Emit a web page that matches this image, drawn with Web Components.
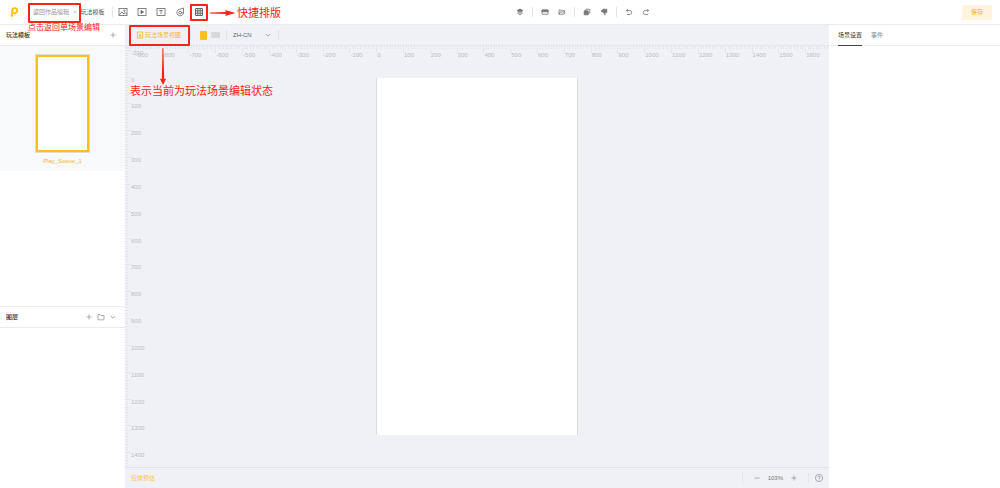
<!DOCTYPE html>
<html lang="zh-CN">
<head>
<meta charset="utf-8">
<meta name="viewport" content="width=device-width, initial-scale=1">
<title>玩法模板</title>
<style>
  html, body { height: 100%; margin: 0; }
  body {
    font: 6px/10px "Liberation Sans", "Noto Sans CJK SC", sans-serif;
    color: #444;
    background: #fff;
    --accent: #fbc116;
    --accent-text: #f5b62c;
    --line: #e9ebef;
    --stage: #eff1f5;
    --mark: #fc2417;
  }
</style>
</head>
<body>
<scene-editor></scene-editor>

<script>
const define = (name, html, setup) => {
  const tpl = document.createElement('template');
  tpl.innerHTML = html;
  customElements.define(name, class extends HTMLElement {
    connectedCallback() {
      if (this.shadowRoot) return;
      this.attachShadow({ mode: 'open' }).append(tpl.content.cloneNode(true));
      if (setup) setup(this, this.shadowRoot);
    }
  });
};

/* Icons: [viewBox size, markup] */
const ICONS = {
  logo: [12, '<g fill="none" stroke="#fbc116" stroke-width="1.900"><circle cx="6.700" cy="4.600" r="2.500"/><path d="M4.300 4.200 3.800 10.800"/></g>'],
  image: [10, '<rect x="1" y="1.500" width="8" height="7"/><path d="M1.200 8 4 5l2 2 1.200-1.400L9 7.500"/><circle cx="6.500" cy="3.700" r=".7"/>'],
  play: [10, '<rect x="1" y="1.500" width="8" height="7"/><path d="M4 3.500v3L6.600 5z" fill="currentColor"/>'],
  text: [10, '<rect x="1" y="1.500" width="8" height="7"/><path d="M3.200 3.500h3.600M5 3.500v3.600"/>'],
  target: [10, '<path d="M5.400 2.200a3.300 3.300 0 1 0 3 2.600"/><circle cx="5.200" cy="5.600" r="1.400"/><path d="M5.200 2.200 8.500 1v3.800c0 1-.8 1.500-1.900 1"/>'],
  grid: [10, '<path d="M1.500 1.500h7v7h-7zM1.500 3.800h7M1.500 6.200h7M3.800 1.500v7M6.200 1.500v7" stroke-width="1"/>'],
  layers: [8, '<path d="M4 1 7 2.500 4 4 1 2.500z" fill="currentColor"/><path d="M1.500 4 4 5.300 6.500 4M1.500 5.500 4 6.800 6.500 5.500"/>'],
  folder: [8, '<path d="M1 2h6v4.300H1z"/><path d="M1 2h6v1.800H1z" fill="currentColor"/>'],
  open: [8, '<path d="M1 6.200V2h2l.6.700h2.900v1.200M1 6.200 2.200 4H7L6.200 6.200z"/>'],
  copy: [8, '<path d="M2.800 1.200h4v4h-4z"/><path d="M1.200 2.800h4v4h-4z" fill="currentColor"/>'],
  paste: [8, '<path d="M1 3.200 3.200 1.200h3.600v3L4.500 5.200z" fill="currentColor"/><path d="M4 4.500 5 7l.7-1.500"/>'],
  undo: [8, '<path d="M2.800 1.200 1.300 2.500l1.500 1.400M1.500 2.500h3.200a2 2 0 0 1 0 4H2"/>'],
  redo: [8, '<path d="M5.200 1.200 6.700 2.500 5.200 3.900M6.500 2.500H3.300a2 2 0 0 0 0 4H6"/>'],
  plus: [8, '<path d="M4 1.500v5M1.500 4h5"/>'],
  minus: [8, '<path d="M1.500 4h5"/>'],
  newdir: [8, '<path d="M1 1.500h2.200l.8 1h3v4.300H1z"/>'],
  chevron: [8, '<path d="M1.800 3 4 5.200 6.200 3"/>'],
  scene: [8, '<rect x="1.300" y="1" width="5.400" height="6"/><path d="M2.700 4h2.600M4 2.700v2.600M3 5.700h2"/>'],
  help: [10, '<circle cx="5" cy="5" r="3.600"/><path d="M3.900 4.200a1.100 1.100 0 1 1 1.100 1.200v.7M5 6.900v.5"/>']
};
define('ui-icon', `
  <style>
    :host { display: inline-flex; flex: none; }
    svg { display: block; fill: none; stroke: currentColor; stroke-width: .8; }
  </style>`, (host, root) => {
  const [s, body] = ICONS[host.getAttribute('name')];
  root.innerHTML += `<svg width="${s}" height="${s}" viewBox="0 0 ${s} ${s}" aria-hidden="true">${body}</svg>`;
});

define('icon-button', `
  <style>
    :host { display: inline-flex; flex: none; }
    button { display: flex; border: 0; padding: 0; background: none; color: inherit; cursor: pointer; }
  </style>
  <button type="button"></button>`, (host, root) => {
  const b = root.querySelector('button');
  b.setAttribute('aria-label', host.getAttribute('label'));
  b.innerHTML = `<ui-icon name="${host.getAttribute('icon')}"></ui-icon>`;
});

define('v-rule', `
  <style>:host { display: block; flex: none; width: 1px; height: 10px; background: #e2e4ea; }</style>`);

define('top-bar', `
  <style>
    :host { display: grid; grid-template-columns: 3fr auto 2fr; align-items: center; height: 24px;
      padding: 0 8px; border-bottom: 1px solid var(--line); background: #fff; }
    div, nav { display: flex; align-items: center; }
    nav { margin-left: 13px; gap: 4px; color: #999; white-space: nowrap; }
    a { color: #999; text-decoration: none; }
    .here { color: #555; }
    .insert { gap: 9px; margin-left: 5px; color: #666; }
    nav + v-rule { margin-left: 7px; }
    .tools { gap: 8px; padding-right: 4px; color: #777; }
    .tools icon-button + icon-button { margin-left: 1px; }
    .save { justify-content: flex-end; }
    .save button { width: 30px; height: 15px; border: 0; border-radius: 1px; padding: 0; background: #fff5dc;
      color: #f5ac16; font: inherit; }
  </style>
  <div>
    <ui-icon name="logo"></ui-icon>
    <nav><a href="#work">返回作品编辑</a><span>&gt;</span><span class="here">玩法模板</span></nav>
    <v-rule></v-rule>
    <div class="insert">
      <icon-button icon="image" label="图片"></icon-button>
      <icon-button icon="play" label="视频"></icon-button>
      <icon-button icon="text" label="文本"></icon-button>
      <icon-button icon="target" label="热区"></icon-button>
      <icon-button icon="grid" label="排版"></icon-button>
    </div>
  </div>
  <div class="tools">
    <icon-button icon="layers" label="层级"></icon-button><v-rule></v-rule>
    <icon-button icon="folder" label="组合"></icon-button>
    <icon-button icon="open" label="取消组合"></icon-button><v-rule></v-rule>
    <icon-button icon="copy" label="复制"></icon-button>
    <icon-button icon="paste" label="粘贴"></icon-button><v-rule></v-rule>
    <icon-button icon="undo" label="撤销"></icon-button>
    <icon-button icon="redo" label="重做"></icon-button>
  </div>
  <div class="save"><button type="button">保存</button></div>`);

define('panel-head', `
  <style>
    :host { display: flex; align-items: center; gap: 4px; height: 20px; padding: 0 8px 0 6px;
      border-bottom: 1px solid var(--line); color: #999; }
    h2 { flex: 1; margin: 0; font: inherit; font-weight: 500; color: #333; }
  </style>
  <h2><slot></slot></h2><slot name="actions"></slot>`);

define('side-panel', `
  <style>
    :host { display: flex; flex-direction: column; min-height: 0; background: #fff; }
    .scenes { flex: 0 0 61%; box-sizing: border-box; border-bottom: 1px solid var(--line); }
    .list { display: flex; justify-content: center; padding: 9px 0 5px; background: #f7f9fa; }
    figure { margin: 0; display: flex; flex-direction: column; align-items: center; gap: 4px; }
    .thumb { width: 49px; height: 93px; border: 2px solid var(--accent); background: #fff; box-shadow: 0 0 0 1px #e2ddcb; }
    figcaption { color: var(--accent-text); }
  </style>
  <section class="scenes">
    <panel-head>玩法模板<icon-button slot="actions" icon="plus" label="添加模板"></icon-button></panel-head>
    <div class="list"><figure><div class="thumb"></div><figcaption>Play_Scene_1</figcaption></figure></div>
  </section>
  <section>
    <panel-head>图层
      <icon-button slot="actions" icon="plus" label="添加图层"></icon-button>
      <icon-button slot="actions" icon="newdir" label="新建文件夹"></icon-button>
      <icon-button slot="actions" icon="chevron" label="展开"></icon-button>
    </panel-head>
  </section>`);

define('stage-toolbar', `
  <style>
    :host { display: flex; align-items: center; height: 20px; padding: 0 11px; border-bottom: 1px solid #e4e6ea; }
    .view { display: flex; align-items: center; gap: 1px; border: 0; padding: 0; background: none;
      color: var(--accent-text); font: inherit; white-space: nowrap; }
    .view ui-icon { color: inherit; }
    .tall, .wide { border: 0; padding: 0; border-radius: 1px; }
    .tall { width: 7px; height: 9px; background: var(--accent); }
    .wide { width: 9px; height: 6px; margin: 0 6px 0 4px; background: #d8d8d8; }
    .view + v-rule { margin: 0 9px; }
    label { display: flex; align-items: center; margin: 0 6px; }
    select { appearance: none; width: 31px; border: 0; padding: 0; background: none; color: #666; font: inherit; outline: 0; }
    ui-icon { color: #999; }
  </style>
  <button class="view" type="button"><ui-icon name="scene"></ui-icon>玩法场景视图</button>
  <v-rule></v-rule>
  <button class="tall" type="button" aria-label="竖屏"></button>
  <button class="wide" type="button" aria-label="横屏"></button>
  <v-rule></v-rule>
  <label><select aria-label="语言"><option>ZH-CN</option></select><ui-icon name="chevron"></ui-icon></label>
  <v-rule></v-rule>`);

/* Ruler: one cell per 100 units, ten ticks in each cell. */
define('stage-ruler', `
  <style>
    :host { display: grid; color: #bbbdc1; --tick: #e3e5e9; }
    :host([axis="x"]) { grid-auto-flow: column; grid-auto-columns: minmax(0, 1fr); height: 14px; }
    :host([axis="y"]) { grid-auto-rows: minmax(0, 1fr); width: 24px; }
    span { white-space: nowrap; background-repeat: no-repeat; }
    :host([axis="x"]) span { padding: 4px 0 0 1px; background-size: 100% 3px, 1px 7px;
      background-image: repeating-linear-gradient(90deg, var(--tick) 0 1px, transparent 1px 10%), linear-gradient(var(--tick), var(--tick)); }
    :host([axis="y"]) span { padding-left: 6px; line-height: 7px; background-size: 3px 100%, 6px 1px;
      background-image: repeating-linear-gradient(var(--tick) 0 1px, transparent 1px 10%), linear-gradient(var(--tick), var(--tick)); }
  </style>`, (host, root) => {
  const from = +host.getAttribute('from'), to = +host.getAttribute('to');
  for (let v = from; v <= to; v += 100) {
    const s = document.createElement('span');
    if (v !== from) s.textContent = v;
    root.append(s);
  }
});

define('stage-canvas', `
  <style>
    :host { display: grid; min-height: 0; overflow: hidden; }
    :host > * { grid-area: 1 / 1; }
    stage-ruler, .board { grid-area: 1 / 1; }
    [axis="x"] { margin: 0 -3px 0 -17px; align-self: start; }
    [axis="y"] { margin: -23px 0 -12px; justify-self: start; }
    .board { place-self: center; width: 200px; height: 357px; background: #fff;
      border: solid #d9dbe0; border-width: 0 1px; }
  </style>
  <stage-ruler axis="x" from="-1000" to="1600"></stage-ruler>
  <stage-ruler axis="y" from="-200" to="1400"></stage-ruler>
  <div class="board"></div>`);

define('status-bar', `
  <style>
    :host { display: flex; align-items: center; height: 20px; padding: 0 5px 0 6px; border-top: 1px solid #e2e4e9; color: #999; }
    a { flex: 1; color: #fcc74a; text-decoration: none; }
    .zoom { display: flex; align-items: center; gap: 7px; margin: 0 10px; }
    output { color: #777; }
    .help { margin-left: 5px; }
  </style>
  <a href="#size">包体预估</a>
  <v-rule></v-rule>
  <div class="zoom">
    <icon-button icon="minus" label="缩小"></icon-button><output>103%</output><icon-button icon="plus" label="放大"></icon-button>
  </div>
  <v-rule></v-rule>
  <icon-button class="help" icon="help" label="帮助"></icon-button>`);

define('property-panel', `
  <style>
    :host { display: block; background: #fff; }
    div { display: flex; gap: 9px; height: 20px; padding: 0 9px; border-bottom: 1px solid var(--line); }
    button { border: 0; border-bottom: 1px solid transparent; margin-bottom: -1px; padding: 0; background: none; color: #888; font: inherit; }
    [aria-selected="true"] { color: #333; border-color: #444; }
  </style>
  <div role="tablist">
    <button type="button" role="tab" aria-selected="true">场景设置</button>
    <button type="button" role="tab" aria-selected="false">事件</button>
  </div>`);

/* Red guide marks that lie over the interface. */
define('guide-mark', `
  <style>
    :host { position: absolute; color: var(--mark); white-space: nowrap; pointer-events: none; }
    :host([box]) { box-sizing: border-box; border: 2px solid var(--mark); border-radius: 1px; }
    svg { display: block; }
  </style><slot></slot>`);

define('scene-editor', `
  <style>
    :host { position: relative; display: grid; grid-template: auto minmax(0, 1fr) / 125px minmax(0, 1fr) 171px; height: 100%; }
    top-bar { grid-column: 1 / -1; }
    main { display: grid; grid-template-rows: auto minmax(0, 1fr) auto; grid-template-columns: minmax(0, 1fr); min-height: 0; background: var(--stage); }
    .back { left: 28px; top: 3px; width: 53px; height: 20px; }
    .back-note { left: 28px; top: 22px; font-size: 8px; line-height: 12px; }
    .layout { left: 190px; top: 4px; width: 18px; height: 17px; }
    .layout-arrow { left: 210px; top: 9px; }
    .layout-note { left: 237px; top: 5px; font-size: 11px; line-height: 16px; }
    .view { left: 129px; top: 25px; width: 61px; height: 21px; }
    .view-arrow { left: 159px; top: 48px; }
    .view-note { left: 130px; top: 83px; font-size: 11px; line-height: 16px; }
  </style>
  <top-bar></top-bar>
  <side-panel></side-panel>
  <main>
    <stage-toolbar></stage-toolbar>
    <stage-canvas></stage-canvas>
    <status-bar></status-bar>
  </main>
  <property-panel></property-panel>
  <guide-mark class="back" box></guide-mark>
  <guide-mark class="back-note">点击返回单场景编辑</guide-mark>
  <guide-mark class="layout" box></guide-mark>
  <guide-mark class="layout-arrow"><svg width="26" height="8" viewBox="0 0 26 8" fill="currentColor"><path d="M0 3.600 16 3 15 1 25.500 4 15 7 16 5 0 4.500z"/></svg></guide-mark>
  <guide-mark class="layout-note">快捷排版</guide-mark>
  <guide-mark class="view" box></guide-mark>
  <guide-mark class="view-arrow"><svg width="8" height="38" viewBox="0 0 8 38" fill="currentColor"><path d="M3.500 0h.9L5.200 31l2-.5L4 37 .8 30.500l2 .5z"/></svg></guide-mark>
  <guide-mark class="view-note">表示当前为玩法场景编辑状态</guide-mark>`);
</script>
</body>
</html>
